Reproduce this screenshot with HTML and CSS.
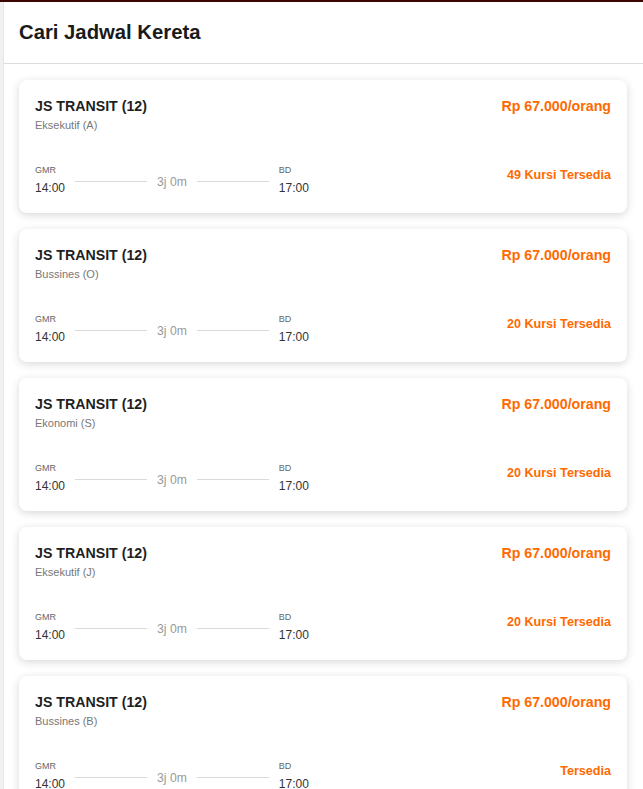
FILE: index.html
```html
<!DOCTYPE html>
<html lang="id">
<head>
<meta charset="utf-8">
<title>Cari Jadwal Kereta</title>
<link rel="stylesheet" href="styles.css">
</head>
<body>
<div class="topbar"></div>
<div class="page">
  <div class="side"></div>
  <main class="main">
    <header class="header"><h1>Cari Jadwal Kereta</h1></header>
    <section class="list">
      <article class="card">
        <div class="row top">
          <div><div class="name">JS TRANSIT (12)</div><div class="cls">Eksekutif (A)</div></div>
          <div class="price">Rp 67.000/orang</div>
        </div>
        <div class="row bottom">
          <div class="route">
            <div class="stop"><div class="code">GMR</div><div class="time">14:00</div></div>
            <div class="line"></div><div class="dur">3j 0m</div><div class="line"></div>
            <div class="stop"><div class="code">BD</div><div class="time">17:00</div></div>
          </div>
          <div class="seats">49 Kursi Tersedia</div>
        </div>
      </article>
      <article class="card">
        <div class="row top">
          <div><div class="name">JS TRANSIT (12)</div><div class="cls">Bussines (O)</div></div>
          <div class="price">Rp 67.000/orang</div>
        </div>
        <div class="row bottom">
          <div class="route">
            <div class="stop"><div class="code">GMR</div><div class="time">14:00</div></div>
            <div class="line"></div><div class="dur">3j 0m</div><div class="line"></div>
            <div class="stop"><div class="code">BD</div><div class="time">17:00</div></div>
          </div>
          <div class="seats">20 Kursi Tersedia</div>
        </div>
      </article>
      <article class="card">
        <div class="row top">
          <div><div class="name">JS TRANSIT (12)</div><div class="cls">Ekonomi (S)</div></div>
          <div class="price">Rp 67.000/orang</div>
        </div>
        <div class="row bottom">
          <div class="route">
            <div class="stop"><div class="code">GMR</div><div class="time">14:00</div></div>
            <div class="line"></div><div class="dur">3j 0m</div><div class="line"></div>
            <div class="stop"><div class="code">BD</div><div class="time">17:00</div></div>
          </div>
          <div class="seats">20 Kursi Tersedia</div>
        </div>
      </article>
      <article class="card">
        <div class="row top">
          <div><div class="name">JS TRANSIT (12)</div><div class="cls">Eksekutif (J)</div></div>
          <div class="price">Rp 67.000/orang</div>
        </div>
        <div class="row bottom">
          <div class="route">
            <div class="stop"><div class="code">GMR</div><div class="time">14:00</div></div>
            <div class="line"></div><div class="dur">3j 0m</div><div class="line"></div>
            <div class="stop"><div class="code">BD</div><div class="time">17:00</div></div>
          </div>
          <div class="seats">20 Kursi Tersedia</div>
        </div>
      </article>
      <article class="card">
        <div class="row top">
          <div><div class="name">JS TRANSIT (12)</div><div class="cls">Bussines (B)</div></div>
          <div class="price">Rp 67.000/orang</div>
        </div>
        <div class="row bottom">
          <div class="route">
            <div class="stop"><div class="code">GMR</div><div class="time">14:00</div></div>
            <div class="line"></div><div class="dur">3j 0m</div><div class="line"></div>
            <div class="stop"><div class="code">BD</div><div class="time">17:00</div></div>
          </div>
          <div class="seats">Tersedia</div>
        </div>
      </article>
    </section>
  </main>
</div>
</body>
</html>
```

FILE: styles.css
```css
* { box-sizing: border-box; }
html, body { margin: 0; padding: 0; }
body {
  font-family: "Liberation Sans", Arial, sans-serif;
  background: #fff;
  color: #222;
  overflow: hidden;
  height: 789px;
}
.topbar { height: 2px; background: #3d0404; }
.page { display: flex; }
.side { width: 4px; flex: none; background: #f1f1f1; border-right: 1px solid #e6e6e6; min-height: 787px; }
.main { flex: 1; min-width: 0; }
.header {
  height: 62px;
  border-bottom: 1px solid #dcdcdc;
  padding: 19px 0 0 15px;
}
.header h1 { margin: 0; font-size: 20.3px; font-weight: bold; color: #1a1a1a; line-height: 23px; }
.list { padding: 16px 16px 0 15px; display: flex; flex-direction: column; gap: 16px; }
.card {
  background: #fff;
  border-radius: 8px;
  box-shadow: 0 2px 8px rgba(0,0,0,0.16);
  height: 133px;
  padding: 18px 16px 0 16px;
}
.row { display: flex; justify-content: space-between; align-items: flex-start; }
.name { font-size: 14.2px; font-weight: bold; line-height: 17px; color: #1f1f1f; }
.cls { font-size: 11px; color: #777; line-height: 14px; margin-top: 3px; }
.price { font-size: 14.2px; font-weight: bold; color: #ff6a00; line-height: 17px; }
.bottom { margin-top: 33px; }
.route { display: flex; align-items: flex-start; }
.stop { display: flex; flex-direction: column; }
.code { font-size: 9px; color: #666; line-height: 11px; }
.time { font-size: 12px; color: #333; line-height: 16px; margin-top: 4px; }
.line { width: 72px; height: 1px; background: #dadada; margin: 16px 10px 0 10px; }
.dur { font-size: 12.2px; color: #999; line-height: 14px; margin-top: 10px; }
.seats { font-size: 12.6px; font-weight: bold; color: #ff6a00; line-height: 14px; margin-top: 3px; }
```
